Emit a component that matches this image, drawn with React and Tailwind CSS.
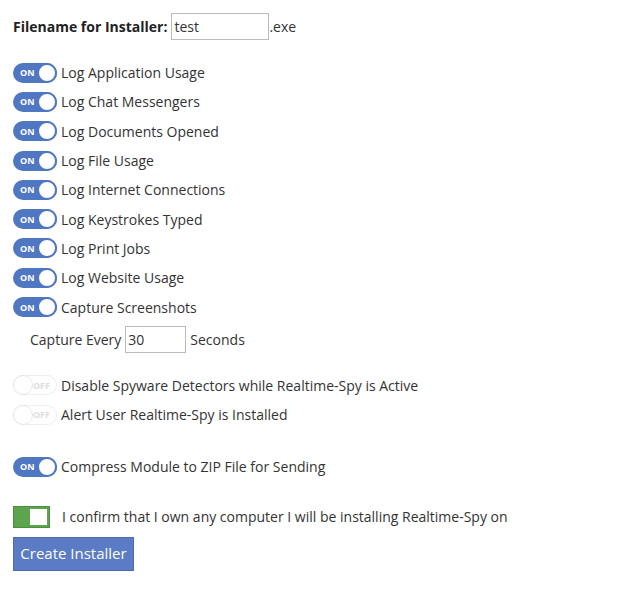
import { useState } from 'react';

const logOptions = [
    'Log Application Usage',
    'Log Chat Messengers',
    'Log Documents Opened',
    'Log File Usage',
    'Log Internet Connections',
    'Log Keystrokes Typed',
    'Log Print Jobs',
    'Log Website Usage',
    'Capture Screenshots',
];

const Toggle = ({ on }) => {
    if (on) {
        return (
            <span className="relative flex items-center w-[44px] h-[20px] rounded-full bg-[#5077c2] shrink-0">
                <span className="pl-[7px] text-[9px] font-bold text-white leading-none">ON</span>
                <span className="absolute right-0 top-0 w-[20px] h-[20px] rounded-full bg-white border-[2px] border-[#5077c2]"></span>
            </span>
        );
    }
    return (
        <span className="relative flex items-center justify-end w-[44px] h-[20px] rounded-full bg-white border border-[#eeeeee] shrink-0">
            <span className="pr-[6px] text-[9px] font-bold text-[#dddddd] leading-none">OFF</span>
            <span className="absolute left-[-1px] top-[-1px] w-[20px] h-[20px] rounded-full bg-white border border-[#e6e6e6]"></span>
        </span>
    );
};

const ToggleRow = ({ on, label }) => (
    <div className="flex items-center gap-[4px] h-[29.3px]">
        <Toggle on={on} />
        <span>{label}</span>
    </div>
);

const App = () => {
    const [filename, setFilename] = useState('test');
    const [interval, setInterval] = useState('30');

    return (
        <div className="bg-white min-h-screen px-[13px] pt-[13px] text-[14px] text-[#333333]" style={{ fontFamily: "'Open Sans', sans-serif" }}>
            {/* filename */}
            <div className="flex items-center h-[27px]">
                <span className="font-bold text-[#222222] mr-[4px]">Filename for Installer:</span>
                <input
                    type="text"
                    value={filename}
                    onChange={(e) => setFilename(e.target.value)}
                    className="w-[98px] h-[27px] border border-[#bbbbbb] px-[2px] outline-none"
                />
                <span>.exe</span>
            </div>

            {/* log options */}
            <div className="mt-[18px]">
                {logOptions.map(label => (
                    <ToggleRow key={label} on label={label} />
                ))}
            </div>

            <div className="flex items-center pl-[17px] mt-[4px] h-[27px]">
                <span className="mr-[4px]">Capture Every</span>
                <input
                    type="text"
                    value={interval}
                    onChange={(e) => setInterval(e.target.value)}
                    className="w-[61px] h-[27px] border border-[#bbbbbb] px-[2px] outline-none"
                />
                <span className="ml-[4px]">Seconds</span>
            </div>

            <div className="mt-[18px]">
                <ToggleRow label="Disable Spyware Detectors while Realtime-Spy is Active" />
                <ToggleRow label="Alert User Realtime-Spy is Installed" />
            </div>

            <div className="mt-[23px]">
                <ToggleRow on label="Compress Module to ZIP File for Sending" />
            </div>

            {/* confirm */}
            <div className="flex items-center mt-[24px] h-[22px]">
                <span className="flex justify-end w-[37px] h-[22px] bg-[#5ea44e] border border-[#4b8f3d] p-[2px] shrink-0">
                    <span className="w-[17px] h-full bg-white"></span>
                </span>
                <span className="ml-[12px]">I confirm that I own any computer I will be installing Realtime-Spy on</span>
            </div>

            <button className="mt-[9px] w-[121px] h-[34px] bg-[#5b7bc4] border border-[#4c6cb6] text-white text-[15px]">
                Create Installer
            </button>
        </div>
    );
};

export default App;
